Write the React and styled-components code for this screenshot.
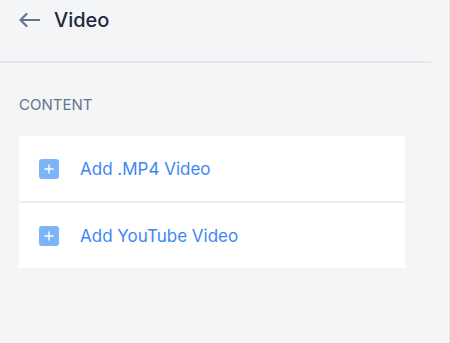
import React from "react";
import styled, { createGlobalStyle } from "styled-components";

const GlobalStyle = createGlobalStyle`
  html, body {
    margin: 0;
    padding: 0;
    background: #f4f5f7;
  }
  body {
    font-family: Inter, "Liberation Sans", sans-serif;
  }
`;

const Panel = styled.div`
  width: 449px;
  height: 343px;
  background: #f4f5f7;
  border-right: 1px solid #e4e6ea;
`;

const Header = styled.div`
  display: flex;
  align-items: center;
  gap: 14px;
  height: 40px;
  padding: 0 0 21px 19px;
  margin-right: 18px;
  border-bottom: 2px solid #e4e6ea;
`;

const BackButton = styled.button`
  display: flex;
  align-items: center;
  padding: 0;
  border: none;
  background: none;
  cursor: pointer;
`;

const Title = styled.h1`
  margin: 0;
  font-size: 20px;
  font-weight: 500;
  color: #1e293b;
`;

const Content = styled.div`
  padding: 32px 44px 0 19px;
`;

const SectionLabel = styled.div`
  font-size: 15px;
  font-weight: 400;
  color: #64748b;
  margin-bottom: 22px;
`;

const List = styled.div`
  display: flex;
  flex-direction: column;
  gap: 2px;
  background: #eceef1;
`;

const Item = styled.button`
  display: flex;
  align-items: center;
  gap: 21px;
  height: 65px;
  padding: 0 0 0 20px;
  border: none;
  background: #ffffff;
  font-family: inherit;
  font-size: 17px;
  font-weight: 400;
  color: #4186f5;
  text-align: left;
  cursor: pointer;
`;

const PlusBox = styled.span`
  display: flex;
  align-items: center;
  justify-content: center;
  width: 20px;
  height: 20px;
  border-radius: 3px;
  background: #7db4f8;
`;

const Plus = () => (
  <PlusBox>
    <svg width="10" height="10" viewBox="0 0 10 10">
      <path d="M5 0.5V9.5M0.5 5H9.5" stroke="#fff" strokeWidth="1.4" />
    </svg>
  </PlusBox>
);

const App = () => (
  <>
    <GlobalStyle />
    <Panel>
      <Header>
        <BackButton>
          <svg width="21" height="14" viewBox="0 0 21 14" fill="none">
            <path
              d="M7.5 1L1.5 7L7.5 13M1.5 7H20.5"
              stroke="#64748b"
              strokeWidth="2.2"
              strokeLinecap="round"
              strokeLinejoin="round"
            />
          </svg>
        </BackButton>
        <Title>Video</Title>
      </Header>
      <Content>
        <SectionLabel>CONTENT</SectionLabel>
        <List>
          <Item>
            <Plus />
            Add .MP4 Video
          </Item>
          <Item>
            <Plus />
            Add YouTube Video
          </Item>
        </List>
      </Content>
    </Panel>
  </>
);

export default App;
